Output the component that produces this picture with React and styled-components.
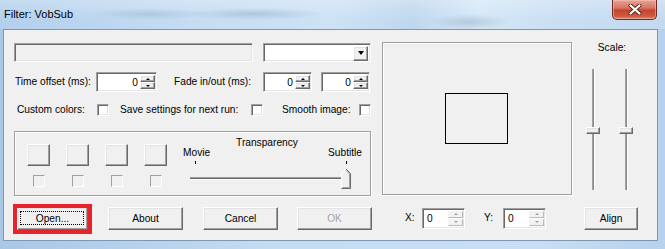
import styled, { createGlobalStyle, css } from 'styled-components'

const GlobalStyle = createGlobalStyle`
  html, body {
    margin: 0;
    padding: 0;
    overflow: hidden;
  }
  body {
    font-family: "Liberation Sans", Arial, sans-serif;
    background: #bcd5ee;
  }
`

const sunken = css`
  box-sizing: border-box;
  border: 1px solid;
  border-color: #a0a0a0 #ffffff #ffffff #a0a0a0;
  box-shadow: inset 1px 1px #696969, inset -1px -1px #e3e3e3;
`

const raised = css`
  box-sizing: border-box;
  border: 1px solid;
  border-color: #ffffff #696969 #696969 #ffffff;
  box-shadow: inset -1px -1px #a0a0a0, inset 1px 1px #e3e3e3;
  background: #f0f0f0;
`

const etched = css`
  box-sizing: border-box;
  border: 1px solid #a0a0a0;
  box-shadow: inset 1px 1px #ffffff, 1px 1px #ffffff;
`

const Window = styled.div`
  width: 665px;
  height: 249px;
  display: flex;
  flex-direction: column;
  background: linear-gradient(to right, #a9c7e6 0%, #c4dbf1 40%, #c9def2 80%, #b7d1ec 100%);
`

const TitleBar = styled.div`
  height: 29px;
  flex: none;
  display: flex;
  align-items: flex-start;
  background:
    radial-gradient(ellipse 60px 6px at 150px 14px, rgba(110, 135, 165, 0.25), transparent),
    radial-gradient(ellipse 70px 6px at 255px 14px, rgba(110, 135, 165, 0.3), transparent),
    radial-gradient(ellipse 40px 8px at 470px 22px, rgba(120, 140, 165, 0.3), transparent),
    linear-gradient(to bottom, rgba(255, 255, 255, 0.25), rgba(255, 255, 255, 0) 70%),
    linear-gradient(to right, #b2cfec 0%, #c3dbf2 25%, #cde2f5 50%, #bfd7ee 62%, #d4e7f7 72%, #c9def3 85%, #c2d9f0 100%);
`

const Caption = styled.span`
  margin: 8px 0 0 4px;
  font-size: 11px;
  line-height: 13px;
  color: #000;
`

const CloseButton = styled.div`
  margin-left: auto;
  margin-right: 8px;
  width: 45px;
  height: 20px;
  box-sizing: border-box;
  border: 1px solid #6e2a20;
  border-top: none;
  border-radius: 0 0 5px 5px;
  background: linear-gradient(to bottom, #e8a495 0%, #d77764 40%, #c4452f 55%, #cf5a3e 85%, #e0866a 100%);
  box-shadow: inset 0 0 0 1px rgba(255, 210, 200, 0.45);
  display: flex;
  align-items: center;
  justify-content: center;
`

const Client = styled.div`
  flex: 1;
  margin: 0 7px 8px 3px;
  background: #f0f0f0;
  border: 1px solid #7f97b2;
  display: flex;
  align-items: flex-start;
  padding: 12px 0 0 10px;
  font-size: 10.2px;
  color: #000;
`

const LeftCol = styled.div`
  width: 358px;
  flex: none;
  display: flex;
  flex-direction: column;
`

const Row = styled.div`
  display: flex;
  align-items: center;
  height: ${p => p.$h}px;
  margin-top: ${p => p.$mt || 0}px;
`

const Label = styled.span`
  box-sizing: border-box;
  width: ${p => p.$w}px;
  padding-left: ${p => p.$pl || 0}px;
  white-space: nowrap;
  line-height: 12px;
`

const TextField = styled.div`
  ${sunken};
  width: 239px;
  height: 19px;
  background: #f0f0f0;
`

const Combo = styled.div`
  ${sunken};
  width: 108px;
  height: 19px;
  margin-left: 10px;
  background: #fff;
  display: flex;
  justify-content: flex-end;
  padding: 1px;
`

const DropButton = styled.div`
  ${raised};
  width: 15px;
  height: 15px;
  margin: 1px 1px 0 0;
  display: flex;
  align-items: center;
  justify-content: center;
`

const Arrow = styled.span`
  width: 0;
  height: 0;
  border-left: ${p => p.$s}px solid transparent;
  border-right: ${p => p.$s}px solid transparent;
  ${p => (p.$up ? 'border-bottom' : 'border-top')}: ${p => p.$h}px solid ${p => p.$c || '#000'};
`

const Spin = styled.div`
  ${sunken};
  width: ${p => p.$w}px;
  height: ${p => p.$h || 20}px;
  margin-left: ${p => p.$ml || 0}px;
  background: #fff;
  display: flex;
  align-items: stretch;
  padding: 2px 1px 2px 2px;
`

const SpinValue = styled.span`
  flex: 1;
  text-align: ${p => p.$align};
  line-height: 16px;
  padding: 0 2px;
`

const UpDown = styled.div`
  width: 15px;
  display: flex;
  flex-direction: column;
  ${p => p.$soft && 'margin-left: 2px; gap: 1px;'}
`

const SpinBtn = styled.div`
  ${raised};
  flex: 1;
  display: flex;
  align-items: center;
  justify-content: center;
  ${p =>
    p.$soft &&
    css`
      border-color: #f4f4f4 #b8b8b8 #b8b8b8 #f4f4f4;
      box-shadow: none;
      background: #f2f2f2;
    `}
`

const Check = styled.span`
  ${sunken};
  width: 12px;
  height: 12px;
  background: ${p => (p.$dim ? '#f0f0f0' : '#fff')};
  box-shadow: ${p => (p.$dim ? 'none' : 'inset 1px 1px #696969, inset -1px -1px #e3e3e3')};
`

const Group = styled.div`
  ${etched};
  margin-top: 15px;
  width: 357px;
  height: 65px;
  display: flex;
  align-items: flex-start;
  padding-left: 12px;
`

const ColorCell = styled.div`
  display: flex;
  flex-direction: column;
  align-items: center;
  gap: 9px;
  margin: 12px 16px 0 0;
`

const ColorButton = styled.div`
  ${raised};
  width: 23px;
  height: 22px;
`

const TrackBar = styled.div`
  margin: 5px 0 0 0;
  width: 179px;
  display: flex;
  flex-direction: column;
`

const TrackTitle = styled.div`
  height: 10px;
  line-height: 12px;
  text-align: center;
  padding-right: 11px;
`

const EndLabels = styled.div`
  height: 12px;
  line-height: 12px;
  display: flex;
  justify-content: space-between;
`

const Ticks = styled.div`
  margin-top: 2px;
  height: 3px;
  display: flex;
  justify-content: space-between;
  padding: 0 15px 0 12px;
`

const Tick = styled.span`
  width: 1px;
  height: 3px;
  background: #000;
`

const Lane = styled.div`
  position: relative;
  margin-top: 4px;
  height: 20px;
`

const HTrack = styled.div`
  margin: 9px 0 0 7px;
  width: 153px;
  height: 3px;
  box-sizing: border-box;
  border-top: 1px solid #a0a0a0;
  border-bottom: 1px solid #fff;
  background: #696969;
`

const HThumb = styled.svg`
  position: absolute;
  left: 158px;
  top: 0;
`

const ButtonRow = styled.div`
  display: flex;
  margin-top: 11px;
`

const Button = styled.div`
  ${raised};
  position: relative;
  width: ${p => p.$w || 75}px;
  height: 23px;
  margin-left: ${p => p.$ml || 0}px;
  margin-top: ${p => p.$mt || 0}px;
  display: flex;
  align-items: center;
  justify-content: center;
  line-height: 12px;
  color: ${p => (p.$disabled ? '#a0a0a0' : '#000')};
  text-shadow: ${p => (p.$disabled ? '1px 1px #fff' : 'none')};
`

const FocusRing = styled.span`
  position: absolute;
  inset: 3px 3px 4px 2px;
  border: 1px dotted #000;
`

const Highlight = styled.span`
  position: absolute;
  inset: -4px -5px -5px -5px;
  border: 4px solid #e8232b;
  pointer-events: none;
`

const PreviewCol = styled.div`
  width: 190px;
  margin-left: 10px;
  flex: none;
  display: flex;
  flex-direction: column;
`

const Preview = styled.div`
  ${etched};
  height: 153px;
  display: flex;
  align-items: center;
  justify-content: center;
`

const SubRect = styled.div`
  width: 63px;
  height: 51px;
  box-sizing: border-box;
  border: 1px solid #000;
  margin-left: -1px;
`

const ScaleCol = styled.div`
  width: 54px;
  margin-left: 12px;
  flex: none;
  display: flex;
  flex-direction: column;
`

const ScaleLabel = styled.div`
  line-height: 12px;
  text-align: center;
  padding-left: 2px;
`

const Sliders = styled.div`
  margin-top: 15px;
  height: 121px;
  display: flex;
  gap: 19px;
  padding-left: 2px;
`

const VSlider = styled.div`
  position: relative;
  width: 14px;
  display: flex;
  justify-content: center;
`

const VTrack = styled.div`
  width: 3px;
  box-sizing: border-box;
  border-left: 1px solid #a0a0a0;
  border-right: 1px solid #fff;
  background: #8a8a8a;
`

const VThumb = styled.div`
  ${raised};
  position: absolute;
  left: 0;
  top: 58px;
  width: 14px;
  height: 7px;
`

const XYRow = styled.div`
  margin-top: 12px;
  height: 22px;
  display: flex;
  align-items: center;
`

const CloseGlyph = () => (
  <svg width="14" height="11" viewBox="0 0 14 11">
    <path d="M2.5 1.5 L11.5 9.5 M11.5 1.5 L2.5 9.5" stroke="#5a1e16" strokeWidth="4" strokeLinecap="round" />
    <path d="M2.5 1.5 L11.5 9.5 M11.5 1.5 L2.5 9.5" stroke="#fff" strokeWidth="2.3" strokeLinecap="round" />
  </svg>
)

const SpinBox = ({ w, ml }) => (
  <Spin $w={w} $ml={ml}>
    <SpinValue $align="right">0</SpinValue>
    <UpDown>
      <SpinBtn><Arrow $up $s={2} $h={2} /></SpinBtn>
      <SpinBtn><Arrow $s={2} $h={2} /></SpinBtn>
    </UpDown>
  </Spin>
)

const PosBox = () => (
  <Spin $w={43} $h={21}>
    <SpinValue $align="left">0</SpinValue>
    <UpDown $soft>
      <SpinBtn $soft><Arrow $up $s={2} $h={2} $c="#a0a0a0" /></SpinBtn>
      <SpinBtn $soft><Arrow $s={2} $h={2} $c="#a0a0a0" /></SpinBtn>
    </UpDown>
  </Spin>
)

const Thumb = () => (
  <HThumb width="11" height="21" viewBox="0 0 11 21">
    <path d="M0.5 5.5 L5 1 L9.5 5.5 V20.5 H0.5 Z" fill="#f0f0f0" />
    <path d="M0.5 20 V5.5 L5 1" stroke="#fff" fill="none" />
    <path d="M5 1 L9.5 5.5 V20.5 H0.5" stroke="#696969" fill="none" />
    <path d="M5 2.5 L8.5 6 V19.5 H1.5" stroke="#a0a0a0" fill="none" />
  </HThumb>
)

export default function App() {
  return (
    <>
      <GlobalStyle />
      <Window>
        <TitleBar>
          <Caption>Filter: VobSub</Caption>
          <CloseButton><CloseGlyph /></CloseButton>
        </TitleBar>
        <Client>
          <LeftCol>
            <Row $h={20}>
              <TextField />
              <Combo>
                <DropButton><Arrow $s={3.5} $h={4} /></DropButton>
              </Combo>
            </Row>
            <Row $h={20} $mt={10}>
              <Label $w={82} $pl={1}>Time offset (ms):</Label>
              <SpinBox w={61} />
              <Label $w={106} $pl={17}>Fade in/out (ms):</Label>
              <SpinBox w={49} />
              <SpinBox w={49} ml={9} />
            </Row>
            <Row $h={13} $mt={11}>
              <Label $w={83} $pl={3}>Custom colors:</Label>
              <Check />
              <Label $w={142} $pl={11}>Save settings for next run:</Label>
              <Check />
              <Label $w={96} $pl={19}>Smooth image:</Label>
              <Check />
            </Row>
            <Group>
              {[0, 1, 2, 3].map(i => (
                <ColorCell key={i}>
                  <ColorButton />
                  <Check $dim />
                </ColorCell>
              ))}
              <TrackBar>
                <TrackTitle>Transparency</TrackTitle>
                <EndLabels>
                  <span>Movie</span>
                  <span>Subtitle</span>
                </EndLabels>
                <Ticks>
                  <Tick />
                  <Tick />
                </Ticks>
                <Lane>
                  <HTrack />
                  <Thumb />
                </Lane>
              </TrackBar>
            </Group>
            <ButtonRow>
              <Button $w={71} $ml={3}>
                <FocusRing />
                Open...
                <Highlight />
              </Button>
              <Button $ml={20}>About</Button>
              <Button $ml={20}>Cancel</Button>
              <Button $ml={19} $disabled>OK</Button>
            </ButtonRow>
          </LeftCol>
          <PreviewCol>
            <Preview>
              <SubRect />
            </Preview>
            <XYRow>
              <Label $w={40} $pl={23}>X:</Label>
              <PosBox />
              <Label $w={38} $pl={19}>Y:</Label>
              <PosBox />
            </XYRow>
          </PreviewCol>
          <ScaleCol>
            <ScaleLabel>Scale:</ScaleLabel>
            <Sliders>
              <VSlider><VTrack /><VThumb /></VSlider>
              <VSlider><VTrack /><VThumb /></VSlider>
            </Sliders>
            <Button $w={54} $mt={17}>Align</Button>
          </ScaleCol>
        </Client>
      </Window>
    </>
  )
}
